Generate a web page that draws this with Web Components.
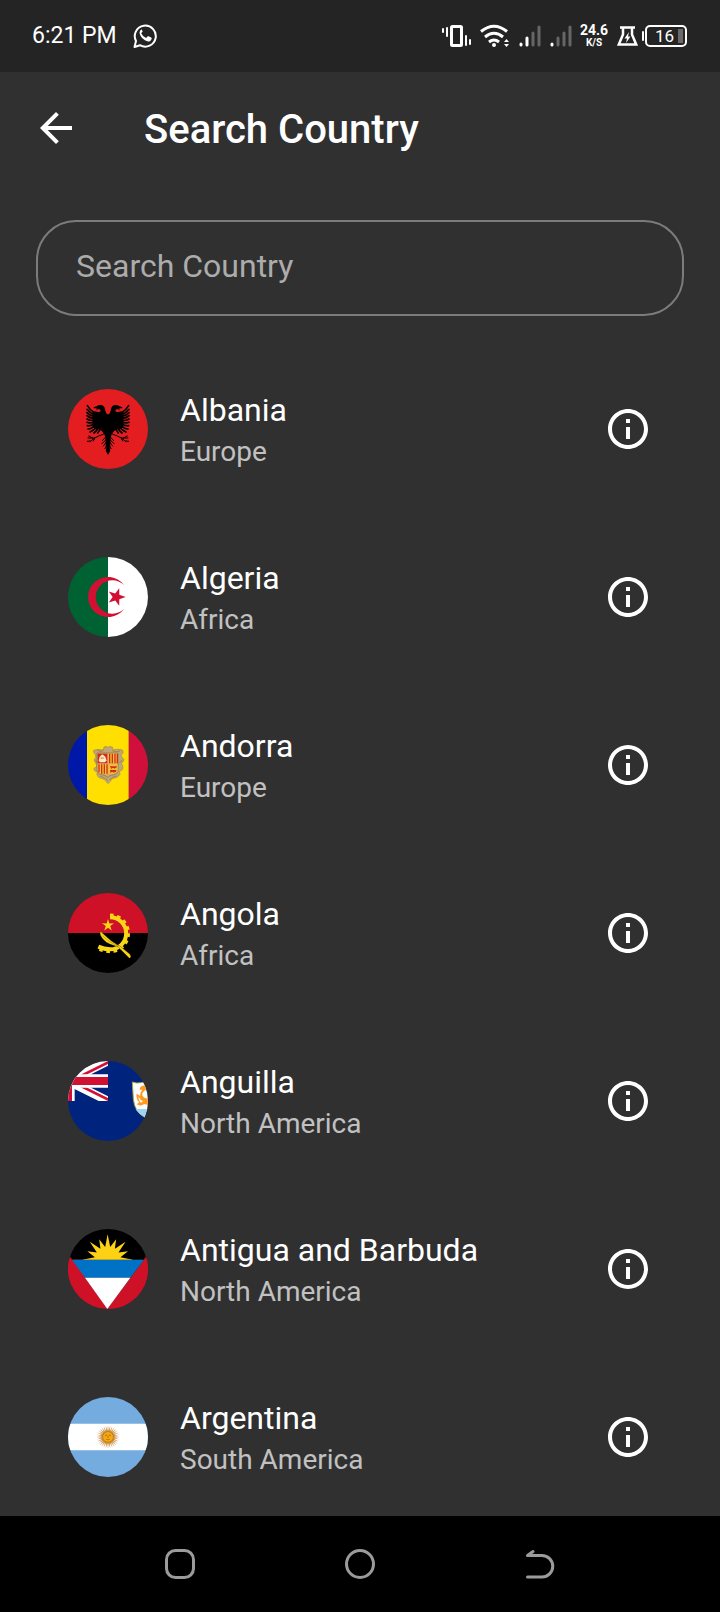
<!DOCTYPE html>
<html lang="en">
<head>
<meta charset="utf-8">
<meta name="viewport" content="width=device-width, initial-scale=1">
<title>Search Country</title>
<style>
  html, body { height: 100%; }
  body { margin: 0; background: #303030; color: #fff; font-family: Roboto, "Noto Sans", sans-serif; }
</style>
</head>
<body>
<country-app>
  <country-item code="al" name="Albania" region="Europe"></country-item>
  <country-item code="dz" name="Algeria" region="Africa"></country-item>
  <country-item code="ad" name="Andorra" region="Europe"></country-item>
  <country-item code="ao" name="Angola" region="Africa"></country-item>
  <country-item code="ai" name="Anguilla" region="North America"></country-item>
  <country-item code="ag" name="Antigua and Barbuda" region="North America"></country-item>
  <country-item code="ar" name="Argentina" region="South America"></country-item>
</country-app>

<script>
const define = (name, render) => customElements.define(name, class extends HTMLElement {
  connectedCallback() {
    if (this.shadowRoot) return;
    this.attachShadow({ mode: 'open' }).innerHTML = render(this);
  }
});

/* Points of a star: outer radii may vary from ray to ray. */
function star(cx, cy, radii, inner, count, startDeg) {
  const pts = [];
  for (let i = 0; i < count; i++) {
    const r = radii[i % radii.length];
    const a = (startDeg + i * 360 / count) * Math.PI / 180;
    const b = a + Math.PI / count;
    pts.push((cx + r * Math.cos(a)).toFixed(1) + ',' + (cy + r * Math.sin(a)).toFixed(1));
    pts.push((cx + inner * Math.cos(b)).toFixed(1) + ',' + (cy + inner * Math.sin(b)).toFixed(1));
  }
  return pts.join(' ');
}

const eagleHalf = `
  <path d="M144 103 L147 103 Q152 96 153 88 Q154 77 164 75 Q173 74 178 79 L187 82 L187 85 L177 85 L181 89 L174 88 Q166 87 166 92 Q167 96 173 96 L185 94 L190 97 V140 L184 146 L172 148 L163 152 L158 159 L154 165 L153 172 L144 178Z"/>
  <g fill="none" stroke="#000" stroke-width="5" stroke-linecap="round">
    <path d="M186 98 Q198 90 206 77"/><path d="M186 103 Q199 99 207 88"/><path d="M186 109 Q199 107 207 98"/>
    <path d="M186 115 Q199 115 207 107"/><path d="M186 121 Q199 123 207 117"/><path d="M186 126 Q198 131 207 127"/>
    <path d="M185 131 Q196 139 206 137"/><path d="M183 135 Q192 147 204 147"/><path d="M178 139 Q186 152 198 156"/>
    <path d="M173 142 Q177 152 186 159"/><path d="M167 145 Q170 154 175 159"/>
  </g>
  <g fill="none" stroke="#000" stroke-width="3" stroke-linecap="round">
    <path d="M156 162 L172 168 L184 174 L204 174"/><path d="M184 174 L198 185"/><path d="M184 174 L188 183"/><path d="M190 174 L202 168"/><path d="M198 183 L206 184"/>
    <path d="M150 170 L161 182"/><path d="M148 177 L162 191"/><path d="M147 184 L158 198"/><path d="M146 190 L153 206"/>
  </g>
  <path d="M144 166 L152 172 L151 192 L149 204 L151 212 L144 225Z"/>`;

const jackRed = '#d21034';

/* Each drawing shares a 240-unit square viewBox, clipped to a disc by the host. */
const flags = {
  al: `<path fill="#e41e20" d="M24 21h240v240H24z"/>
    <g transform="translate(0 -6)">${eagleHalf}<g transform="matrix(-1 0 0 1 288 0)">${eagleHalf}</g></g>`,

  dz: `<path fill="#fff" d="M144 21h120v240H144z"/><path fill="#006233" d="M24 21h120v240H24z"/>
    <path fill="#d21034" d="M193 106 A60 60 0 1 0 193 176 A50 50 0 1 1 193 106Z"/>
    <polygon fill="#d21034" points="${star(169, 141, [28], 11, 5, 0)}"/>`,

  ad: `<path fill="#d0103a" d="M206 21h58v240h-58z"/><path fill="#fedf00" d="M81 21h125v240H81z"/><path fill="#0018a8" d="M24 21h57v240H24z"/>
    <path fill="#c0a674" stroke="#a38a55" stroke-width="2" d="M144 88 Q151 83 158 88 L158 96 Q172 92 186 95 Q192 101 188 107 L183 111 Q185 120 192 124 Q191 132 184 136 Q191 145 188 153 Q184 160 178 160 L180 169 Q174 180 160 181 Q153 183 151 190 L144 197 L138 190 Q134 182 122 181 Q113 178 110 168 L113 161 Q103 161 101 153 Q104 147 110 148 L109 138 Q101 130 103 123 L108 120 L106 110 Q99 105 101 97 Q112 92 130 96 L132 87 Q138 83 144 88Z"/>
    <path fill="#d0a96b" stroke="#8d7140" stroke-width="2" d="M111 105h63v50q0 13-13 15-13 2-18 8-5-6-18-8-14-2-14-15z"/>
    <path fill="#d52b1e" d="M113 107h29v29h-29z"/><path fill="#fbe9c0" d="M127 109l9 7 4 12-6 5h-14l-4-5 3-12z"/><path fill="#e8a33b" d="M122 118h9v5h-9z"/>
    <path fill="#f5c52e" d="M145 107h28v29h-28zM113 139h29v28h-16q-13-2-13-13zM145 139h28v15q0 11-12 13h-16z"/>
    <path stroke="#d52b1e" stroke-width="4" d="M149 107v29M157 107v29M165 107v29M172 107v29M117 139v24M125 139v28M133 139v28M141 139v28"/>
    <path fill="#d52b1e" d="M149 143l5 2h12l4-2-1 8-3-2-2 4-2-3h-5l-3 3zM150 155l4 1h11l4-1-1 8-4-2-2 5-3-4h-4l-4 3z"/>
    <path fill="none" stroke="#907348" stroke-width="2" d="M112 97q10 6 18 1M158 99q12 4 22 0M120 174q14 4 24 14M169 174q-14 2-20 12M187 127q-7 3-8 8M106 127q5 3 5 8"/>`,

  ao: `<path fill="#ce1126" d="M24 21h240v120H24z"/><path d="M24 141h240v120H24z"/>
    <g fill="none" stroke="#f9d616">
      <path stroke-width="12" d="M150 94 A48 48 0 0 1 151 190 Q132 190 115 182"/>
      <path stroke-width="7" stroke-dasharray="11 11" d="M150 86 A56 56 0 0 1 151 198 Q130 198 110 187"/>
    </g>
    <path fill="#f9d616" stroke="#231a05" stroke-width="1" d="M121 135 Q116 151 139 169 Q150 176 166 180 L174 182 L208 217 L213 213 L210 205 L181 181 L174 178 Q152 165 137 150 Q128 142 121 135Z"/>
    <path fill="none" stroke="#5a4a08" stroke-width="1" d="M128 150 Q145 168 174 181"/>
    <polygon fill="#f9d616" points="${star(144, 118, [19], 7, 5, -90)}"/>`,

  ai: `<path fill="#00247d" d="M24 21h240v240H24z"/>
    <svg x="24" y="21" width="120" height="120" viewBox="0 0 120 120">
      <path stroke="#fff" stroke-width="25" d="M-20 70 L130 -5 M-20 50 L130 125"/>
      <path fill="${jackRed}" d="M16 52 L120 0 V9 L34 52 Z M16 68 L34 68 L120 111 V120 Z"/>
      <path fill="#fff" d="M0 40h120v40H0zM0 0h20v120H0z"/>
      <path fill="${jackRed}" d="M0 48h120v24H0zM0 0h12v120H0z"/>
    </svg>
    <path fill="#fff" stroke="#9ca64a" stroke-width="3" d="M217 84 Q230 89 242 86 L254 84 L290 84 V140 Q284 172 254 190 Q224 175 220 135 Z"/>
    <path fill="#9fd4f2" d="M227 165h40v15l-13 8q-18-9-27-23z"/>
    <path fill="#ff9a1e" d="M253 94 Q239 97 239 107 L247 107 Q238 118 241 126 L230 119 Q227 136 238 145 L230 151 Q243 158 253 150 Q264 154 268 150 V128 Q258 137 250 128 Q242 121 252 112 Q261 103 268 102 V94Z"/>
    <path fill="#fff" d="M236 127q5 14 14 14l-7 5q-9-7-7-19z"/>`,

  ag: `<path d="M24 21h240v92H24z"/>
    <path fill="#ce1126" d="M24 106h8l4 7v148h106V261L74 167V113H36v54l106 94h122V106h-8l-4 7v54L142 261H24z"/>
    <path fill="#ce1126" d="M24 108H32L142 261H24zM264 108H256L142 261H264z"/>
    <path fill="#0072c6" d="M36 113H252L211 167H75z"/><path fill="#fff" d="M75 167H211L142 261z"/>
    <svg x="24" y="21" width="240" height="92" viewBox="24 21 240 92"><polygon fill="#fcd116" points="${star(143, 113, [76, 66], 39, 16, -90)}"/></svg>`,

  ar: `<path fill="#74acdf" d="M24 21h240v240H24z"/><path fill="#fff" d="M24 101h240v80H24z"/>
    <polygon fill="#cf9348" points="${star(144, 141, [35], 19, 32, 0)}"/>
    <circle cx="144" cy="141" r="17" fill="#b8741a"/><circle cx="144" cy="141" r="15" fill="#f6a90f"/>
    <path fill="none" stroke="#8f5a10" stroke-width="2" d="M135 137q4-4 7 0M146 137q4-4 7 0M144 138v6M139 148q5 3 10 0"/>`
};

define('country-flag', el => `
  <style>
    :host { display: block; width: 80px; height: 80px; border-radius: 50%; overflow: hidden; }
    svg { display: block; }
  </style>
  <svg width="100%" height="100%" viewBox="24 21 240 240" role="img" aria-label="Flag">${flags[el.getAttribute('code')]}</svg>`);

define('info-button', el => `
  <style>
    :host { display: block; }
    button { display: block; padding: 0; border: 0; background: none; color: inherit; cursor: pointer; }
    svg { display: block; width: 48px; height: 48px; }
  </style>
  <button type="button" aria-label="Details">
    <svg viewBox="0 0 24 24" fill="currentColor"><path d="M11 7h2v2h-2zm0 4h2v6h-2zm1-9C6.480 2 2 6.480 2 12s4.480 10 10 10 10-4.480 10-10S17.520 2 12 2zm0 18c-4.410 0-8-3.590-8-8s3.590-8 8-8 8 3.590 8 8-3.590 8-8 8z"/></svg>
  </button>`);

define('country-item', el => `
  <style>
    :host { display: flex; align-items: center; gap: 32px; height: 168px; padding: 0 68px; flex: none; }
    .text { flex: 1; min-width: 0; padding-top: 4px; }
    .name { font-size: 32px; line-height: 42px; }
    .region { font-size: 28px; line-height: 42px; color: #c1c1c1; }
  </style>
  <country-flag code="${el.getAttribute('code')}"></country-flag>
  <div class="text">
    <div class="name">${el.getAttribute('name')}</div>
    <div class="region">${el.getAttribute('region')}</div>
  </div>
  <info-button></info-button>`);

define('battery-level', el => `
  <style>
    :host { display: flex; align-items: center; gap: 1px; }
    .tip { width: 2px; height: 10px; background: #fff; border-radius: 1px; }
    .cell { display: flex; align-items: center; justify-content: flex-end; gap: 4px; box-sizing: border-box; width: 42px; height: 22px; padding-right: 2px; border: 2px solid #fff; border-radius: 5px; font-size: 17px; line-height: 18px; }
    .fill { width: 5px; height: 14px; background: #6a6a6a; }
  </style>
  <span class="tip"></span><span class="cell"><slot></slot><span class="fill"></span></span>`);

define('status-bar', el => `
  <style>
    :host { display: flex; align-items: center; flex: none; height: 72px; padding: 0 33px 0 32px; background: #242424; }
    svg { display: block; flex: none; }
    .time { font-size: 23px; line-height: 28px; margin-right: 16px; }
    .icons { display: flex; align-items: center; margin-left: auto; gap: 9px; }
    .speed { display: flex; flex-direction: column; align-items: center; font-weight: 700; font-size: 14px; line-height: 13px; width: 28px; margin-left: -1px; }
    .unit { font-size: 10px; line-height: 11px; }
    battery-level { margin-left: -5px; }
  </style>
  <span class="time">6:21 PM</span>
  <svg width="24" height="26" viewBox="0 0 24 26" fill="none" stroke="#fff" stroke-width="2">
    <path d="M1.500 24 L3 18 A10.500 10.500 0 1 1 7 22.200 Z" stroke-linejoin="round"/>
    <path fill="#fff" stroke="none" d="M8.500 6.500 q-2 .8-2 3.500 q1.500 6.500 8.500 8.500 q3 0 3.600-2.800 v-.9 l-3.600-1.800 -1.900 2 q-3.600-1.500-4.900-4.700 l1.500-1.700 -1.200-2.500z"/>
  </svg>
  <div class="icons">
    <svg width="29" height="22" viewBox="0 0 29 22" fill="none" stroke="#fff" stroke-width="2" stroke-linecap="round">
      <rect x="9.500" y="1.500" width="10" height="19" rx="1" stroke-width="3" stroke-linecap="butt"/>
      <path d="M5 3v8M1 4v3M24 11v9M28 15v4"/>
    </svg>
    <svg width="30" height="24" viewBox="0 0 30 24" fill="none" stroke="#fff" stroke-width="3">
      <path d="M1 7.500Q14 -3 27 7.500M5 13Q14 5.500 23 13M9 18Q14 14 19 18"/>
      <circle cx="14" cy="21" r="2" fill="#fff" stroke="none"/>
      <path fill="#fff" stroke="none" d="M24 18l2.500-3 2.500 3zM24 20l2.500 3 2.500-3z"/>
    </svg>
    <svg width="22" height="22" viewBox="0 0 22 22" stroke-width="3" stroke-linecap="round">
      <path stroke="#fff" d="M2 19v1M8 13v7"/><path stroke="#666" d="M14 8v12M20 2v18"/>
    </svg>
    <svg width="22" height="22" viewBox="0 0 22 22" stroke-width="3" stroke-linecap="round">
      <path stroke="#fff" d="M2 19v1"/><path stroke="#666" d="M8 13v7M14 8v12M20 2v18"/>
    </svg>
    <div class="speed"><span>24.6</span><span class="unit">K/S</span></div>
    <svg width="21" height="20" viewBox="0 0 21 20" fill="none" stroke="#fff" stroke-width="2.500">
      <path d="M3 1.500h15M6 2v6.500L1.800 18.500h17.400L15 8.500V2"/>
      <path fill="#fff" stroke="none" d="M12 6L7.500 12.500H10L9 17l4.500-6.500H11z"/>
    </svg>
    <battery-level>16</battery-level>
  </div>`);

define('app-header', el => `
  <style>
    :host { display: flex; align-items: center; flex: none; height: 112px; padding: 0 32px; gap: 64px; }
    button { padding: 0; border: 0; background: none; color: inherit; cursor: pointer; }
    svg { display: block; width: 48px; height: 48px; }
    h1 { margin: 0; padding-top: 4px; font-size: 40px; line-height: 48px; font-weight: 500; }
  </style>
  <button type="button" aria-label="Back">
    <svg viewBox="0 0 24 24" fill="currentColor"><path d="M20 11H7.830l5.590-5.590L12 4l-8 8 8 8 1.410-1.410L7.830 13H20v-2z"/></svg>
  </button>
  <h1><slot></slot></h1>`);

define('search-field', el => `
  <style>
    :host { display: block; flex: none; margin: 36px 36px 0; }
    input { display: block; box-sizing: border-box; width: 100%; height: 96px; padding: 0 38px 4px; border: 2px solid #7c7c7c; border-radius: 40px; background: none; color: #fff; font: 32px/40px Roboto, "Noto Sans", sans-serif; outline: none; }
    input::placeholder { color: #acacac; opacity: 1; }
  </style>
  <input type="text" aria-label="Search Country" placeholder="Search Country">`);

define('system-nav', el => `
  <style>
    :host { display: flex; flex: none; height: 96px; padding: 0 12.5%; background: #000; }
    button { flex: 1; display: flex; align-items: center; justify-content: center; padding: 0; border: 0; background: none; cursor: pointer; }
    svg { display: block; }
  </style>
  <button type="button" aria-label="Recent apps"><svg width="32" height="32" viewBox="0 0 32 32" fill="none" stroke="#9b9b9b" stroke-width="3"><rect x="2.500" y="2.500" width="27" height="27" rx="9"/></svg></button>
  <button type="button" aria-label="Home"><svg width="32" height="32" viewBox="0 0 32 32" fill="none" stroke="#9b9b9b" stroke-width="3"><circle cx="16" cy="16" r="13.500"/></svg></button>
  <button type="button" aria-label="Back"><svg width="32" height="32" viewBox="0 0 32 32" fill="none" stroke="#9b9b9b" stroke-width="3"><path stroke-linecap="round" stroke-linejoin="round" d="M9 3.500L3.500 7.500H18A10.500 10.500 0 0 1 18 29H3.500"/></svg></button>`);

define('country-app', el => `
  <style>
    :host { display: flex; flex-direction: column; height: 100vh; }
    main { flex: 1; min-height: 0; overflow-y: auto; scrollbar-width: none; padding-top: 29px; display: flex; flex-direction: column; }
  </style>
  <status-bar></status-bar>
  <app-header>Search Country</app-header>
  <search-field></search-field>
  <main><slot></slot></main>
  <system-nav></system-nav>`);
</script>
</body>
</html>
